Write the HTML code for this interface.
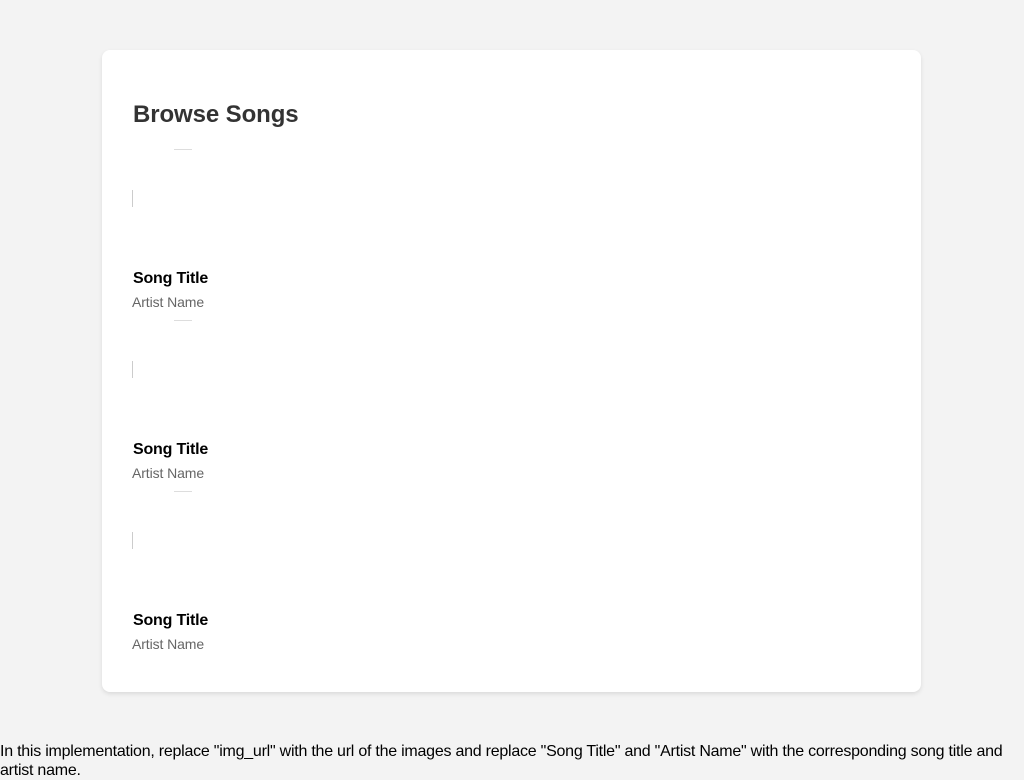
<!DOCTYPE html>
<html><head><style>
body{margin:0;background:#f3f3f3;font-family:"Liberation Sans",Arial,sans-serif;width:1024px;height:780px;overflow:hidden;position:relative}
.card{position:absolute;left:102px;top:50px;width:819px;height:642px;background:#fff;border-radius:8px;box-shadow:0 2px 4px rgba(0,0,0,0.1)}
h2{position:absolute;left:31px;top:51px;margin:0;font-size:24px;font-weight:bold;color:#333;letter-spacing:-0.1px}
.item{position:absolute;left:30px;width:200px;height:160px}
.arc{position:absolute;left:42px;top:0;width:18px;height:1px;background:#ddd}
.side{position:absolute;left:0;top:41px;width:1px;height:17px;background:#ccc}
.t{position:absolute;left:1px;top:121px;font-size:16px;font-weight:bold;color:#000;letter-spacing:-0.2px}
.a{position:absolute;left:0;top:145px;font-size:14px;color:#666;letter-spacing:-0.1px}
.foot{position:absolute;left:0;top:742px;font-size:16px;color:#000;line-height:19px;width:1024px;letter-spacing:-0.24px}
</style></head><body>
<div class="card">
<h2>Browse Songs</h2>
<div class="item" style="top:99px"><div class="arc"></div><div class="side"></div><div class="t">Song Title</div><div class="a">Artist Name</div></div>
<div class="item" style="top:270px"><div class="arc"></div><div class="side"></div><div class="t">Song Title</div><div class="a">Artist Name</div></div>
<div class="item" style="top:441px"><div class="arc"></div><div class="side"></div><div class="t">Song Title</div><div class="a">Artist Name</div></div>
</div>
<div class="foot">In this implementation, replace "img_url" with the url of the images and replace "Song Title" and "Artist Name" with the corresponding song title and artist name.</div>
</body></html>
